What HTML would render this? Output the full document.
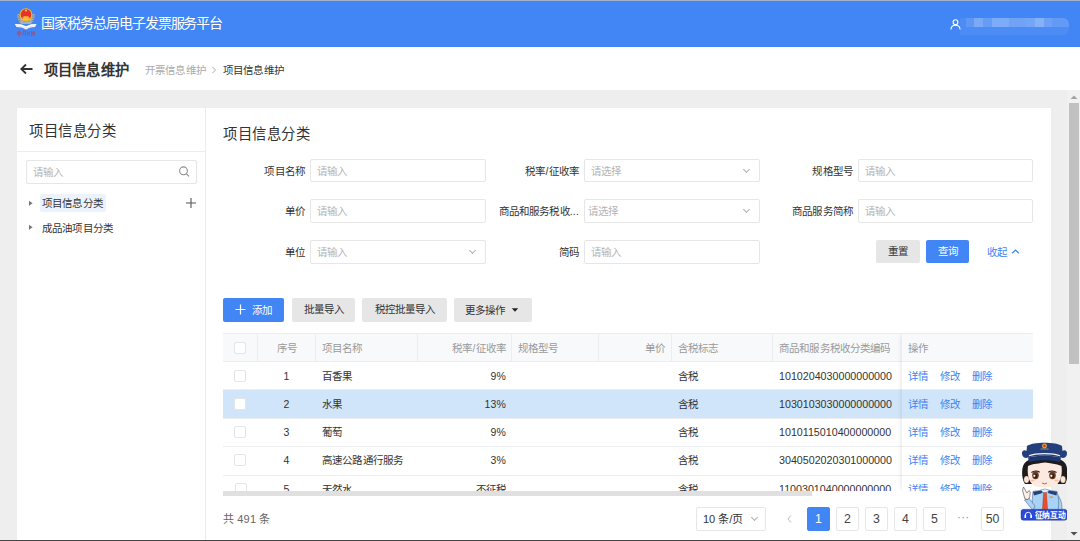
<!DOCTYPE html>
<html lang="zh-CN">
<head>
<meta charset="utf-8">
<style>
*{box-sizing:border-box;margin:0;padding:0}
html,body{width:1080px;height:541px;overflow:hidden;background:#eeeeee;font-family:"Liberation Sans",sans-serif;color:#333;position:relative}
.a{position:absolute}
.t{position:absolute;white-space:nowrap;font-size:10.5px;line-height:14px;letter-spacing:.15px}
.inp{position:absolute;height:24px;border:1px solid #e6e6e6;border-radius:2px;background:#fff}
.inp span{position:absolute;left:6px;top:4px;font-size:10.5px;line-height:14px;color:#b4b4b4;white-space:nowrap}
.lbl{position:absolute;font-size:10.5px;line-height:14px;color:#333;text-align:right;white-space:nowrap;letter-spacing:.15px}
.chev{position:absolute;right:10px;top:7px;width:5px;height:5px;border-right:1px solid #b0b0b0;border-bottom:1px solid #b0b0b0;transform:rotate(45deg)}
.btn{position:absolute;height:23px;border-radius:2px;font-size:10.5px;line-height:23px;text-align:center;white-space:nowrap}
.gray{background:#e6e6e6;color:#333}
.blue{background:#4285f4;color:#fff}
.hl{position:absolute;left:223px;width:810px;height:1px;background:#ebedf0}
.vl{position:absolute;top:333px;height:29px;width:1px;background:#ebedf0}
.cb{position:absolute;left:234px;width:12px;height:12px;border:1px solid #e3e5e9;border-radius:2px;background:#fff}
.c{position:absolute;white-space:nowrap;font-size:10.5px;line-height:14px;color:#333;letter-spacing:.15px}
.h{color:#999}
.r{text-align:right}
.lk{color:#3f7ff2}
.pg{position:absolute;top:507px;width:23px;height:23.5px;border:1px solid #e6e6e6;border-radius:2px;font-size:12.3px;line-height:22px;text-align:center;color:#444;background:#fff;font-family:"Liberation Sans",sans-serif}
</style>
</head>
<body>
<!-- top chrome line -->
<div class="a" style="left:0;top:0;width:1080px;height:1px;background:#a3b2cc"></div>
<!-- header -->
<div class="a" style="left:0;top:1px;width:1080px;height:46px;background:#4285f4"></div>
<svg class="a" style="left:0;top:0" width="42" height="42" viewBox="0 0 42 42">
  <path d="M17.5 14 C17 19 19 23 22 24 L30 24 C33 23 35 19 34.5 14 L32.5 14 C33 18 31 21.5 26 22 C21 21.5 19 18 19.5 14 Z" fill="#a9b0ba"/>
  <path d="M18 15.5 l1.5 1 M17.8 18 l1.8 .8 M18.5 20.5 l1.8 .5 M34 15.5 l-1.5 1 M34.2 18 l-1.8 .8 M33.5 20.5 l-1.8 .5" stroke="#6e7680" stroke-width=".9"/>
  <ellipse cx="26" cy="15" rx="6.5" ry="6.8" fill="#f4b929"/>
  <ellipse cx="26" cy="14.6" rx="5.3" ry="5.5" fill="#e5322a"/>
  <path d="M22.5 17.2 h7 v2 h-7 Z M23.5 16.2 h5 v1 h-5 Z" fill="#f3b93a"/><path d="M21 19.5 h10" stroke="#f3c04a" stroke-width="1"/>
  <circle cx="26" cy="10.5" r="1" fill="#f6d04a"/>
  <path d="M14.8 24 L21 24.3 L26 26.2 L31 24.3 L36.6 24 L35 27 L30 27.6 L26 29.6 L22 27.6 L16.5 27 Z" fill="#ffffff"/>
  <path d="M16 25.5 L26 28 L36 25.5" fill="none" stroke="#c9cfd8" stroke-width=".6"/>
  <g stroke="#cf3a3f" stroke-width=".6" fill="none">
    <path d="M19 30.5 V36.5 M17.3 32 h3.6 v2 h-3.6 Z"/>
    <path d="M23 31 h3 M23.5 31 l-.8 4.5 M25.5 31 v5 M23 33.5 h3"/>
    <path d="M27.5 31 v5 M27 33 h2.5 M29.5 31.5 v4"/>
    <path d="M31.5 30.8 v5.5 M31 33 h3.5 M33 31 v5 M34.5 31.5 l-.5 4.5"/>
  </g>
</svg>
<div class="t" style="left:41px;top:14px;font-size:14px;line-height:18px;letter-spacing:-1.05px;color:#fff">国家税务总局电子发票服务平台</div>
<!-- user -->
<svg class="a" style="left:950px;top:19px" width="11" height="11" viewBox="0 0 11 11">
  <circle cx="5.5" cy="3.2" r="2.4" fill="none" stroke="#fff" stroke-width="1.1"/>
  <path d="M1 10.5 C1 7.2 3 6.2 5.5 6.2 C8 6.2 10 7.2 10 10.5" fill="none" stroke="#fff" stroke-width="1.1"/>
</svg>
<div class="a" style="left:960px;top:18px;width:109px;height:17px;background:rgba(255,255,255,0.06);border-radius:0 6px 6px 0"></div>
<div class="a" style="left:966px;top:18px;width:8px;height:9px;background:rgba(255,255,255,0.10)"></div>
<div class="a" style="left:974px;top:18px;width:9px;height:9px;background:rgba(255,255,255,0.25)"></div>
<div class="a" style="left:983px;top:18px;width:9px;height:9px;background:rgba(255,255,255,0.14)"></div>
<div class="a" style="left:992px;top:18px;width:17px;height:9px;background:rgba(255,255,255,0.27)"></div>
<div class="a" style="left:1009px;top:18px;width:17px;height:9px;background:rgba(255,255,255,0.20)"></div>
<div class="a" style="left:1026px;top:18px;width:9px;height:9px;background:rgba(255,255,255,0.22)"></div>
<div class="a" style="left:1035px;top:18px;width:9px;height:9px;background:rgba(255,255,255,0.32)"></div>
<div class="a" style="left:1044px;top:18px;width:8px;height:9px;background:rgba(255,255,255,0.18)"></div>
<div class="a" style="left:1052px;top:18px;width:17px;height:9px;background:rgba(255,255,255,0.12);border-radius:0 6px 0 0"></div>

<!-- sub header -->
<div class="a" style="left:0;top:47px;width:1080px;height:43px;background:#fff"></div>
<svg class="a" style="left:19px;top:63px" width="15" height="12" viewBox="0 0 15 12">
  <path d="M13.5 6 H2.5 M7 1.5 L2.3 6 L7 10.5" fill="none" stroke="#333" stroke-width="1.8"/>
</svg>
<div class="t" style="left:44px;top:60.5px;font-size:14.3px;line-height:18px;font-weight:bold">项目信息维护</div>
<div class="t" style="left:145px;top:63px;color:#aaa">开票信息维护</div>
<svg class="a" style="left:211px;top:66px" width="6" height="8" viewBox="0 0 6 8"><path d="M1.5 1 L4.5 4 L1.5 7" fill="none" stroke="#aaa" stroke-width="1"/></svg>
<div class="t" style="left:223px;top:63px;color:#333">项目信息维护</div>

<!-- left card -->
<div class="a" style="left:17px;top:108px;width:188px;height:433px;background:#fff"></div>
<div class="t" style="left:29px;top:121.5px;font-size:14.4px;letter-spacing:.55px;line-height:18px">项目信息分类</div>
<div class="a" style="left:17px;top:151px;width:188px;height:1px;background:#ededed"></div>
<div class="inp" style="left:26px;top:160px;width:171px;height:24px"><span>请输入</span></div>
<svg class="a" style="left:177px;top:164px" width="14" height="14" viewBox="0 0 14 14">
  <circle cx="6.5" cy="6.8" r="3.9" fill="none" stroke="#8c8c8c" stroke-width="1.1"/>
  <path d="M9.3 9.6 L12 12.3" stroke="#8c8c8c" stroke-width="1.2"/>
</svg>
<div class="a" style="left:40px;top:194px;width:66px;height:18px;background:#edf3fd;border-radius:2px"></div>
<svg class="a" style="left:28px;top:200px" width="6" height="7" viewBox="0 0 6 7"><path d="M1 0.8 L4.6 3.3 L1 5.8 Z" fill="#777"/></svg>
<div class="t" style="left:42px;top:196px">项目信息分类</div>
<svg class="a" style="left:185px;top:197px" width="12" height="12" viewBox="0 0 12 12"><path d="M6 1 V11 M1 6 H11" stroke="#555" stroke-width="1.1"/></svg>
<svg class="a" style="left:28px;top:224px" width="6" height="7" viewBox="0 0 6 7"><path d="M1 0.8 L4.6 3.3 L1 5.8 Z" fill="#777"/></svg>
<div class="t" style="left:42px;top:221px">成品油项目分类</div>
<div class="a" style="left:205px;top:108px;width:1px;height:433px;background:#ececec"></div>

<!-- right card -->
<div class="a" style="left:206px;top:108px;width:845px;height:433px;background:#fff"></div>
<div class="t" style="left:223px;top:124.5px;font-size:14.4px;letter-spacing:.55px;line-height:18px">项目信息分类</div>

<div class="lbl" style="left:240px;width:65px;top:164px">项目名称</div>
<div class="inp" style="height:23px;left:310px;top:159px;width:176px"><span>请输入</span></div>
<div class="lbl" style="left:490px;width:89px;top:164px">税率/征收率</div>
<div class="inp" style="height:23px;left:584px;top:159px;width:176px"><span>请选择</span><i class="chev"></i></div>
<div class="lbl" style="left:770px;width:83px;top:164px">规格型号</div>
<div class="inp" style="height:23px;left:858px;top:159px;width:175px"><span>请输入</span></div>

<div class="lbl" style="left:240px;width:65px;top:204px">单价</div>
<div class="inp" style="left:310px;top:199px;width:176px"><span>请输入</span></div>
<div class="lbl" style="left:490px;width:89px;top:204px">商品和服务税收...</div>
<div class="inp" style="left:584px;top:199px;width:176px"><span style="left:3px">请选择</span><i class="chev"></i></div>
<div class="lbl" style="left:770px;width:83px;top:204px">商品服务简称</div>
<div class="inp" style="left:858px;top:199px;width:175px"><span>请输入</span></div>

<div class="lbl" style="left:240px;width:65px;top:245px">单位</div>
<div class="inp" style="left:310px;top:240px;width:176px"><span>请输入</span><i class="chev"></i></div>
<div class="lbl" style="left:490px;width:89px;top:245px">简码</div>
<div class="inp" style="left:584px;top:240px;width:176px"><span>请输入</span></div>

<div class="btn gray" style="left:876px;top:240px;width:44px">重置</div>
<div class="btn blue" style="left:926px;top:240px;width:43px">查询</div>
<div class="t lk" style="left:987px;top:245px">收起</div>
<svg class="a" style="left:1011px;top:248px" width="9" height="7" viewBox="0 0 9 7"><path d="M1.2 5.2 L4.5 2 L7.8 5.2" fill="none" stroke="#3f7ff2" stroke-width="1.2"/></svg>

<!-- toolbar -->
<div class="btn blue" style="left:223px;top:298px;width:61px;height:23.5px"></div>
<svg class="a" style="left:235px;top:304px" width="11" height="11" viewBox="0 0 11 11"><path d="M5.5 0.5 V10.5 M0.5 5.5 H10.5" stroke="#fff" stroke-width="1.2"/></svg>
<div class="t" style="left:252px;top:303px;color:#fff">添加</div>
<div class="btn gray" style="left:292px;top:298px;width:63px;height:23.5px;line-height:23.5px">批量导入</div>
<div class="btn gray" style="left:362px;top:298px;width:85px;height:23.5px;line-height:23.5px">税控批量导入</div>
<div class="btn gray" style="left:454px;top:298px;width:78px;height:23.5px;line-height:23.5px"></div>
<div class="t" style="left:465px;top:303px">更多操作</div>
<svg class="a" style="left:511px;top:307px" width="8" height="6" viewBox="0 0 8 6"><path d="M0.8 1.2 H7.2 L4 4.8 Z" fill="#222"/></svg>

<!-- table -->
<div class="a" style="left:223px;top:333px;width:810px;height:29px;background:#f8f9fb"></div>
<div class="a" style="left:223px;top:390px;width:810px;height:28px;background:#d1e5fa"></div>
<div class="hl" style="top:333px"></div>
<div class="hl" style="top:361px"></div>
<div class="hl" style="top:389px"></div>
<div class="hl" style="top:418px"></div>
<div class="hl" style="top:446px"></div>
<div class="hl" style="top:475px"></div>
<div class="vl" style="left:257px"></div>
<div class="vl" style="left:315px"></div>
<div class="vl" style="left:417px"></div>
<div class="vl" style="left:511px"></div>
<div class="vl" style="left:598px"></div>
<div class="vl" style="left:671px"></div>
<div class="vl" style="left:772px"></div>
<!-- fixed column shadow -->
<div class="a" style="left:902px;top:333px;width:131px;height:158px;background:transparent;box-shadow:-3px 0 4px -2px rgba(0,0,0,0.10)"></div>

<div class="cb" style="top:342px"></div>
<div class="c h" style="left:277px;top:341px">序号</div>
<div class="c h" style="left:322px;top:341px">项目名称</div>
<div class="c h r" style="left:420px;width:86px;top:341px">税率/征收率</div>
<div class="c h" style="left:518px;top:341px">规格型号</div>
<div class="c h r" style="left:600px;width:65px;top:341px">单价</div>
<div class="c h" style="left:678px;top:341px">含税标志</div>
<div class="c h" style="left:779px;top:341px">商品和服务税收分类编码</div>
<div class="c h" style="left:908px;top:341px">操作</div>

<div class="cb" style="top:370px"></div>
<div class="c" style="left:276px;width:21px;text-align:center;top:369px">1</div>
<div class="c" style="left:322px;top:369px">百香果</div>
<div class="c r" style="left:420px;width:86px;top:369px">9%</div>
<div class="c" style="left:678px;top:369px">含税</div>
<div class="c" style="left:779px;top:369px;font-size:10.7px;letter-spacing:0">1010204030000000000</div>
<div class="c lk" style="left:908px;top:369px">详情</div><div class="c lk" style="left:940px;top:369px">修改</div><div class="c lk" style="left:972px;top:369px">删除</div>

<div class="cb" style="top:398px"></div>
<div class="c" style="left:276px;width:21px;text-align:center;top:397px">2</div>
<div class="c" style="left:322px;top:397px">水果</div>
<div class="c r" style="left:420px;width:86px;top:397px">13%</div>
<div class="c" style="left:678px;top:397px">含税</div>
<div class="c" style="left:779px;top:397px;font-size:10.7px;letter-spacing:0">1030103030000000000</div>
<div class="c lk" style="left:908px;top:397px">详情</div><div class="c lk" style="left:940px;top:397px">修改</div><div class="c lk" style="left:972px;top:397px">删除</div>

<div class="cb" style="top:426px"></div>
<div class="c" style="left:276px;width:21px;text-align:center;top:425px">3</div>
<div class="c" style="left:322px;top:425px">葡萄</div>
<div class="c r" style="left:420px;width:86px;top:425px">9%</div>
<div class="c" style="left:678px;top:425px">含税</div>
<div class="c" style="left:779px;top:425px;font-size:10.7px;letter-spacing:0">1010115010400000000</div>
<div class="c lk" style="left:908px;top:425px">详情</div><div class="c lk" style="left:940px;top:425px">修改</div><div class="c lk" style="left:972px;top:425px">删除</div>

<div class="cb" style="top:454px"></div>
<div class="c" style="left:276px;width:21px;text-align:center;top:453px">4</div>
<div class="c" style="left:322px;top:453px">高速公路通行服务</div>
<div class="c r" style="left:420px;width:86px;top:453px">3%</div>
<div class="c" style="left:678px;top:453px">含税</div>
<div class="c" style="left:779px;top:453px;font-size:10.7px;letter-spacing:0">3040502020301000000</div>
<div class="c lk" style="left:908px;top:453px">详情</div><div class="c lk" style="left:940px;top:453px">修改</div><div class="c lk" style="left:972px;top:453px">删除</div>

<!-- row 5 clipped -->
<div class="a" style="left:223px;top:476px;width:810px;height:15px;overflow:hidden">
  <div class="cb" style="left:12px;top:7px"></div>
  <div class="c" style="left:53px;width:21px;text-align:center;top:6px">5</div>
  <div class="c" style="left:99px;top:6px">天然水</div>
  <div class="c r" style="left:197px;width:86px;top:6px">不征税</div>
  <div class="c" style="left:455px;top:6px">含税</div>
  <div class="c" style="left:556px;top:6px;font-size:10.7px;letter-spacing:0">1100301040000000000</div>
  <div class="c lk" style="left:685px;top:6px">详情</div><div class="c lk" style="left:717px;top:6px">修改</div><div class="c lk" style="left:749px;top:6px">删除</div>
</div>
<!-- table h-scrollbar -->
<div class="a" style="left:223px;top:491px;width:589px;height:4.5px;background:#e0e0e0"></div>

<!-- pagination -->
<div class="t" style="left:223px;top:511.5px;color:#666;font-size:11px">共 491 条</div>
<div class="inp" style="left:696px;top:507px;width:70px;height:24px"><span style="color:#333;left:6px;top:4px;font-size:11px">10 条/页</span><i class="chev" style="right:8.5px"></i></div>
<svg class="a" style="left:786px;top:514px" width="7" height="10" viewBox="0 0 7 10"><path d="M5 1.5 L2 5 L5 8.5" fill="none" stroke="#bbb" stroke-width="1"/></svg>
<div class="pg" style="left:807px;background:#4285f4;border-color:#4285f4;color:#fff">1</div>
<div class="pg" style="left:836px">2</div>
<div class="pg" style="left:865px">3</div>
<div class="pg" style="left:894px">4</div>
<div class="pg" style="left:923px">5</div>
<div class="t" style="left:957px;top:510px;color:#999;font-size:12px">···</div>
<div class="pg" style="left:981px">50</div>


<!-- mascot -->
<svg class="a" style="left:1015px;top:436px" width="60" height="90" viewBox="1015 436 60 90">
  <!-- right arm -->
  <path d="M1056 494 C1060 496 1062 503 1062 509 L1056 514 L1053 509 Z" fill="#a9d3f4" stroke="#34548a" stroke-width=".5"/>
  <!-- body shirt -->
  <path d="M1033 491.5 C1038 490 1051 490 1057 491.5 C1059 497 1059 504 1058 511 L1033 511 C1032 504 1032 497 1033 491.5 Z" fill="#a9d3f4" stroke="#34548a" stroke-width=".5"/>
  <!-- left arm -->
  <path d="M1024.5 500 L1029 498 L1035 506 L1033 510.5 Z" fill="#a9d3f4" stroke="#34548a" stroke-width=".5"/>
  <!-- hand -->
  <path d="M1023.5 487 L1027 493 L1029 490.5 L1030.2 492 L1029.8 497 L1028 499.5 L1025 499 L1023.5 494 L1022.5 490 Z" fill="#fbeee6" stroke="#444" stroke-width=".6"/>
  <!-- epaulettes -->
  <path d="M1033 491.8 L1042 490.5 L1042.5 493 L1034 495.5 Z M1057 491.8 L1048.5 490.5 L1048 493 L1056.5 495.5 Z" fill="#24417c"/>
  <path d="M1040.5 490 L1045 494 L1049.5 490 L1045 489 Z" fill="#d7ebfb" stroke="#34548a" stroke-width=".4"/>
  <rect x="1049.5" y="496.5" width="3.5" height="1.2" fill="#e9873a"/>
  <!-- tie -->
  <path d="M1043.5 492.5 L1046.5 492.5 L1047.6 509 L1045 514 L1042.4 509 Z" fill="#e5502c" stroke="#9a3020" stroke-width=".3"/>
  <!-- hair back -->
  <path d="M1022.5 468 C1021.5 474 1022.5 480 1025 484 L1065 484 C1067.5 480 1068 474 1067 468 C1066 461 1060 457 1045 457 C1030 457 1024 461 1022.5 468 Z" fill="#1d1b1b"/>
  <!-- ears -->
  <ellipse cx="1026.5" cy="479.5" rx="2.6" ry="3.6" fill="#fbe5d8" stroke="#6a4a3a" stroke-width=".3"/>
  <ellipse cx="1063" cy="479.5" rx="2.6" ry="3.6" fill="#fbe5d8" stroke="#6a4a3a" stroke-width=".3"/>
  <!-- face -->
  <path d="M1028 466 C1027 474 1028.5 481 1033 485 C1037 488.3 1052 488.3 1056.5 485 C1061 481 1062.5 474 1061.5 466 C1056 463.5 1050 463.5 1045 462.5 C1040 463.5 1033 463.5 1028 466 Z" fill="#fceae0"/>
  <!-- eyes -->
  <ellipse cx="1035.5" cy="475.3" rx="3.3" ry="3.9" fill="#6b3a24"/>
  <ellipse cx="1052.5" cy="475.3" rx="3.3" ry="3.9" fill="#6b3a24"/>
  <ellipse cx="1035.5" cy="476" rx="1.7" ry="2" fill="#2a160e"/>
  <ellipse cx="1052.5" cy="476" rx="1.7" ry="2" fill="#2a160e"/>
  <circle cx="1034.4" cy="475.8" r="1.1" fill="#fff"/>
  <circle cx="1051.4" cy="475.8" r="1.1" fill="#fff"/>
  <path d="M1031.5 472.5 q4 -2.8 8.2 -.2 M1048.3 472.3 q4 -2.6 8.2 .2" stroke="#111" stroke-width="1.1" fill="none"/>
  <!-- cheeks -->
  <ellipse cx="1032.5" cy="480.5" rx="2.2" ry="1.1" fill="#f8c0a8"/>
  <ellipse cx="1056.5" cy="480.5" rx="2.2" ry="1.1" fill="#f8c0a8"/>
  <path d="M1042 483 q2.5 1.8 5 0" stroke="#7a4030" stroke-width=".7" fill="none"/>
  <!-- cap -->
  <path d="M1027 446 C1032 441.5 1057 441.5 1062 446 L1062.5 451 C1064 449.5 1067.5 450 1067 454 C1066.5 458 1063 458.5 1061 457.5 C1052 455 1037 455 1028 457.5 C1026 458.5 1022.5 458 1022 454 C1021.5 450 1025 449.5 1026.5 451 Z" fill="#233f7c"/>
  <path d="M1028 457.5 C1037 455 1052 455 1061 457.5 L1060 462 C1051 459.5 1038 459.5 1029 462 Z" fill="#1e3670"/>
  <path d="M1029 455.8 C1036 452.8 1053 452.8 1060 455.8" stroke="#f2f4f8" stroke-width="1.2" fill="none"/>
  <circle cx="1044.5" cy="446" r="2.4" fill="#e9b43a"/>
  <circle cx="1044.5" cy="446" r="1.4" fill="#d8382c"/>
  <path d="M1040.5 449 h8" stroke="#c9b070" stroke-width=".7"/>
  <!-- label -->
  <rect x="1021" y="509.3" width="46" height="11" rx="2.5" fill="#2b4ad6" stroke="#1d2f8a" stroke-width=".4"/>
  <path d="M1025.3 518 v-2.8 a2.9 2.9 0 0 1 5.8 0 v2.8" stroke="#fff" stroke-width=".9" fill="none"/>
  <rect x="1024.6" y="514.8" width="1.5" height="3.2" fill="#fff"/>
  <rect x="1030.4" y="514.8" width="1.5" height="3.2" fill="#fff"/>
  <text x="1034.5" y="518.4" font-size="7.8" font-weight="bold" fill="#fff" letter-spacing="-.1">征纳互动</text>
</svg>
<!-- page scrollbar -->
<div class="a" style="left:1067px;top:90px;width:13px;height:451px;background:#f1f1f1"></div>
<svg class="a" style="left:1069px;top:94px" width="10" height="6" viewBox="0 0 10 6"><path d="M1.5 5 H8.5 L5 1.5 Z" fill="#a3a3a3"/></svg>
<div class="a" style="left:1069px;top:103px;width:10px;height:261px;background:#c1c1c1"></div>
<svg class="a" style="left:1069px;top:531px" width="10" height="6" viewBox="0 0 10 6"><path d="M1.5 1 H8.5 L5 4.5 Z" fill="#505050"/></svg>
<div class="a" style="left:0;top:540px;width:1080px;height:1px;background:#444"></div>
</body>
</html>
